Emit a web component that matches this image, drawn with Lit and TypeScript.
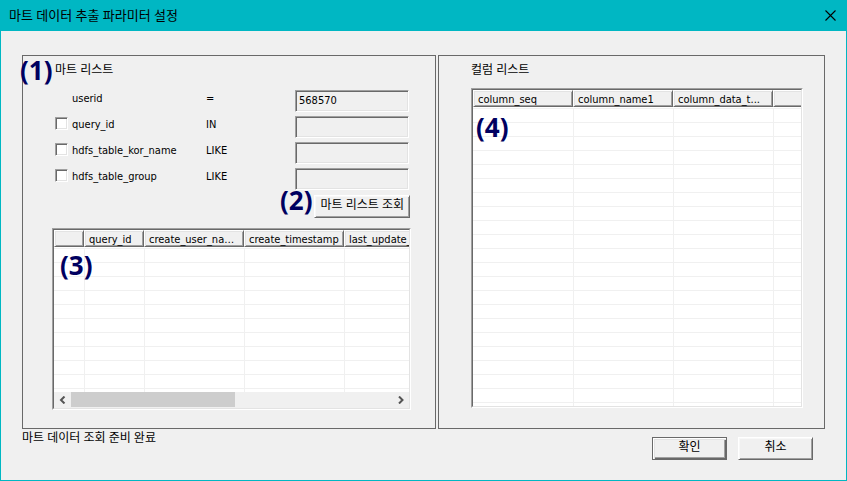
import { LitElement, html, css, nothing } from "lit";
import { customElement, property, state } from "lit/decorators.js";

interface Column {
  label: string;
  width: number;
}

interface Filter {
  name: string;
  operator: string;
  value: string;
  optional: boolean;
}

const shared = css`
  *,
  *::before,
  *::after {
    box-sizing: border-box;
  }
  button,
  input {
    font: inherit;
    color: inherit;
    margin: 0;
    border-radius: 0;
  }
`;

@customElement("list-view")
export class ListView extends LitElement {
  @property({ attribute: false }) columns: Column[] = [];
  @property({ type: Number }) rows = 22;
  @property({ type: Boolean }) scrollbar = false;
  @property() caption = "";

  static styles = [
    shared,
    css`
      :host {
        display: flex;
        flex-direction: column;
        min-height: 0;
        min-width: 0;
        background: #fff;
        border: 1px solid;
        border-color: #a0a0a0 #fff #fff #a0a0a0;
      }
      .frame {
        flex: 1;
        min-height: 0;
        display: flex;
        flex-direction: column;
        border: 1px solid;
        border-color: #696969 #e3e3e3 #e3e3e3 #696969;
      }
      .view {
        flex: 1 1 0;
        min-height: 0;
        overflow: hidden;
      }
      table {
        table-layout: fixed;
        width: 0;
        border-collapse: separate;
        border-spacing: 0;
      }
      th {
        height: 17px;
        padding: 2px 4px 0;
        font-weight: normal;
        text-align: left;
        line-height: 13px;
        white-space: nowrap;
        overflow: hidden;
        text-overflow: ellipsis;
        background: #f0f0f0;
        border: 1px solid;
        border-color: #fff #696969 #696969 #fff;
        box-shadow: inset 1px 1px #e3e3e3, inset -1px -1px #a0a0a0;
      }
      td {
        height: 14px;
        padding: 0;
        border-top: 1px solid #f0f0f0;
      }
      td + td {
        border-left: 1px solid #f0f0f0;
      }
      tbody::before {
        content: "";
        display: block;
        height: 1px;
      }
      .bar {
        display: flex;
        height: 16px;
        background: #f0f0f0;
      }
      .arrow {
        display: grid;
        place-items: center;
        width: 17px;
        padding: 0;
        border: 0;
        background: none;
      }
      .track {
        flex: 1;
        padding-bottom: 1px;
      }
      .thumb {
        width: 51%;
        height: 100%;
        background: #cdcdcd;
      }
    `,
  ];

  render() {
    return html`
      <div class="frame">
        <div class="view">
          <table aria-label=${this.caption}>
            <colgroup>
              ${this.columns.map((c) => html`<col style="width:${c.width}px" />`)}
            </colgroup>
            <thead>
              <tr>
                ${this.columns.map((c) => html`<th scope="col">${c.label}</th>`)}
              </tr>
            </thead>
            <tbody>
              ${Array.from(
                { length: this.rows },
                () => html`<tr>${this.columns.map(() => html`<td></td>`)}</tr>`
              )}
            </tbody>
          </table>
        </div>
        ${this.scrollbar
          ? html`<div class="bar">
              <button class="arrow" aria-label="왼쪽으로">
                <svg width="8" height="8" viewBox="0 0 8 8" fill="none" stroke="#555" stroke-width="2">
                  <path d="M5.5 0.5 2 4 5.5 7.5" />
                </svg>
              </button>
              <div class="track"><div class="thumb"></div></div>
              <button class="arrow" aria-label="오른쪽으로">
                <svg width="8" height="8" viewBox="0 0 8 8" fill="none" stroke="#555" stroke-width="2">
                  <path d="M2 0.5 5.5 4 2 7.5" />
                </svg>
              </button>
            </div>`
          : nothing}
      </div>
    `;
  }
}

@customElement("app-root")
export class AppRoot extends LitElement {
  @state() private filters: Filter[] = [
    { name: "userid", operator: "=", value: "568570", optional: false },
    { name: "query_id", operator: "IN", value: "", optional: true },
    { name: "hdfs_table_kor_name", operator: "LIKE", value: "", optional: true },
    { name: "hdfs_table_group", operator: "LIKE", value: "", optional: true },
  ];

  private martColumns: Column[] = [
    { label: "", width: 30 },
    { label: "query_id", width: 60 },
    { label: "create_user_name", width: 100 },
    { label: "create_timestamp", width: 100 },
    { label: "last_update_", width: 100 },
  ];

  private fieldColumns: Column[] = [
    { label: "column_seq", width: 100 },
    { label: "column_name1", width: 100 },
    { label: "column_data_t...", width: 100 },
    { label: "", width: 100 },
  ];

  static styles = [
    shared,
    css`
      :host {
        display: block;
        font: 11px/16px "DejaVu Sans Condensed", "Noto Sans CJK KR", sans-serif;
        color: #000;
      }
      .dialog {
        display: flex;
        flex-direction: column;
        min-height: 100vh;
        background: #f0f0f0;
        border: 1px solid #00b7c3;
        border-top: 0;
      }
      .title {
        display: flex;
        align-items: center;
        justify-content: space-between;
        height: 31px;
        padding: 0 8px;
        background: #00b7c3;
      }
      h1,
      h2 {
        margin: 0;
        font-family: "Noto Sans", "Noto Sans CJK KR", sans-serif;
        font-weight: normal;
      }
      h1 {
        padding-bottom: 2px;
        font-size: 13px;
      }
      h2 {
        font-size: 12px;
      }
      .close {
        display: grid;
        place-items: center;
        padding: 2px;
        border: 0;
        background: none;
      }
      .panels {
        flex: 1;
        display: grid;
        grid-template-columns: 414fr 387fr;
        gap: 2px;
        padding: 24px 21px 0;
      }
      .panel {
        position: relative;
        display: flex;
        flex-direction: column;
        min-width: 0;
        border: 1px solid #696969;
      }
      .mart {
        padding: 6px 24px 18px 29px;
      }
      .columns {
        padding: 6px 21px 20px 32px;
      }
      .columns h2 {
        margin-bottom: 10px;
      }
      .filters {
        display: grid;
        gap: 4px;
        padding: 12px 2px 0 3px;
      }
      .mart h2 {
        padding-left: 3px;
      }
      .filter {
        display: grid;
        grid-template-columns: 151px 89px 1fr;
        line-height: 18px;
      }
      .name {
        display: flex;
        align-items: flex-start;
        gap: 4px;
      }
      .plain {
        padding-left: 17px;
      }
      .sunken {
        border: 1px solid;
        border-color: #a0a0a0 #fff #fff #a0a0a0;
        box-shadow: inset 1px 1px #696969, inset -1px -1px #e3e3e3;
      }
      .tick {
        appearance: none;
        width: 13px;
        height: 13px;
        margin-top: 1px;
        background: #fff;
      }
      .value {
        width: 100%;
        min-width: 0;
        height: 22px;
        padding: 0 3px 2px;
        background: #f0f0f0;
        outline: 0;
      }
      .push {
        height: 23px;
        padding: 0 5px 3px;
        font: 12px/16px "Noto Sans", "Noto Sans CJK KR", sans-serif;
        background: #f0f0f0;
        border: 1px solid;
        border-color: #fff #696969 #696969 #fff;
        box-shadow: inset 1px 1px #f8f8f8, inset -1px -1px #a0a0a0;
      }
      .search {
        margin: 5px 1px 10px 0;
      }
      list-view {
        flex: 1;
      }
      .footer {
        display: flex;
        justify-content: space-between;
        padding: 1px 33px 20px 21px;
        font: 12px/16px "Noto Sans", "Noto Sans CJK KR", sans-serif;
      }
      .actions {
        display: flex;
        gap: 11px;
        padding-top: 7px;
      }
      .actions .push {
        width: 75px;
      }
      .actions .default {
        border-color: #696969;
        box-shadow: inset 1px 1px #fff, inset 2px 2px #e3e3e3, inset -1px -1px #696969,
          inset -2px -2px #a0a0a0;
      }
      .mark {
        position: absolute;
        font: bold 26px/32px "Noto Sans", sans-serif;
        color: #000060;
        pointer-events: none;
      }
      .one {
        left: -3px;
        top: -2px;
      }
      .two {
        right: 100%;
        top: -6px;
        padding-right: 2px;
      }
      .three {
        left: 37px;
        top: 193px;
      }
      .four {
        left: 37px;
        top: 55px;
      }
      .anchor {
        position: relative;
        align-self: flex-end;
        display: flex;
      }
    `,
  ];

  private renderFilter(f: Filter) {
    return html`<div class="filter">
      ${f.optional
        ? html`<label class="name"><input class="tick sunken" type="checkbox" />${f.name}</label>`
        : html`<label class="plain" for=${f.name}>${f.name}</label>`}
      <span>${f.operator}</span>
      <input class="value sunken" type="text" id=${f.name} aria-label=${f.name} .value=${f.value} />
    </div>`;
  }

  render() {
    return html`
      <main class="dialog">
        <header class="title">
          <h1>마트 데이터 추출 파라미터 설정</h1>
          <button class="close" aria-label="닫기">
            <svg width="11" height="11" viewBox="0 0 11 11" stroke="#000" stroke-width="1.1">
              <path d="M0.5 0.5 10.5 10.5M10.5 0.5 0.5 10.5" />
            </svg>
          </button>
        </header>
        <div class="panels">
          <section class="panel mart">
            <h2>마트 리스트</h2>
            <div class="filters">${this.filters.map((f) => this.renderFilter(f))}</div>
            <div class="anchor">
              <span class="mark two">(2)</span>
              <button class="push search">마트 리스트 조회</button>
            </div>
            <list-view caption="마트 리스트" .columns=${this.martColumns} .rows=${11} scrollbar></list-view>
            <span class="mark one">(1)</span>
            <span class="mark three">(3)</span>
          </section>
          <section class="panel columns">
            <h2>컬럼 리스트</h2>
            <list-view caption="컬럼 리스트" .columns=${this.fieldColumns} .rows=${22}></list-view>
            <span class="mark four">(4)</span>
          </section>
        </div>
        <footer class="footer">
          <span role="status">마트 데이터 조회 준비 완료</span>
          <div class="actions">
            <button class="push default">확인</button>
            <button class="push">취소</button>
          </div>
        </footer>
      </main>
    `;
  }
}
